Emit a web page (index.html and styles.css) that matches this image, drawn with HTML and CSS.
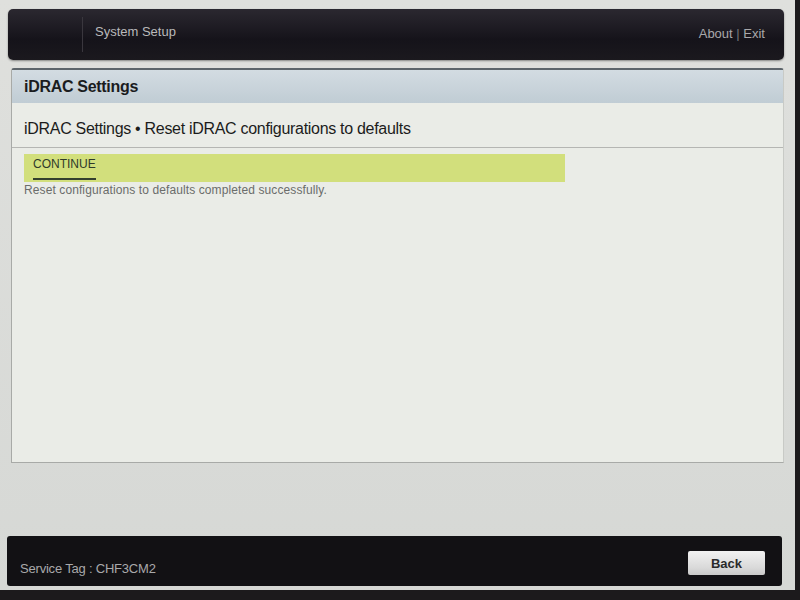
FILE: index.html
```html
<!DOCTYPE html>
<html lang="en">
<head>
  <meta charset="UTF-8">
  <title>System Setup</title>
  <link rel="stylesheet" href="styles.css">
</head>
<body>
  <div class="screen">
    <div class="topbar">
      <div class="logo-slot"></div>
      <div class="app-title">System Setup</div>
      <div class="links">About <span class="sep">|</span> Exit</div>
    </div>

    <div class="panel">
      <div class="panel-head">iDRAC Settings</div>
      <div class="panel-body">
        <div class="crumb">iDRAC Settings • Reset iDRAC configurations to defaults</div>
        <div class="action-row">
          <span class="action">CONTINUE</span>
        </div>
        <p class="message">Reset configurations to defaults completed successfully.</p>
      </div>
    </div>

    <div class="footer">
      <div class="tag">Service Tag : CHF3CM2</div>
      <button class="back">Back</button>
    </div>
  </div>
</body>
</html>
```

FILE: styles.css
```css
html, body {
  margin: 0;
  padding: 0;
}
body {
  width: 800px;
  height: 600px;
  background: #1c1a1c;
  font-family: "Liberation Sans", Arial, sans-serif;
  overflow: hidden;
}
.screen {
  width: 795px;
  height: 590px;
  background: linear-gradient(#dfe0dd, #d6d8d5);
  display: flex;
  flex-direction: column;
}

/* barra superiore */
.topbar {
  margin: 9px 11px 0 8px;
  height: 51px;
  border-radius: 5px;
  background: linear-gradient(#2b2830, #15131a 60%, #1b191e);
  box-shadow: 0 1px 2px rgba(0,0,0,0.4);
  display: flex;
  align-items: center;
  color: #b9b9bb;
  font-size: 13px;
}
.logo-slot {
  width: 74px;
  align-self: stretch;
  margin: 8px 0;
  border-right: 1px solid #3a373e;
}
.app-title {
  margin-left: 12px;
  margin-top: -6px;
  flex: 1;
}
.links {
  margin-right: 19px;
  margin-top: -2px;
  color: #a9a8ab;
}
.sep {
  color: #77757a;
}

/* pannello centrale */
.panel {
  margin: 8px 11px 0 11px;
  height: 392px;
  border: 1px solid #a8aaa7;
  border-right-color: #c8cac6;
  border-top: 2px solid #5d656b;
  border-radius: 3px 3px 0 0;
  background: #eaece7;
  display: flex;
  flex-direction: column;
}
.panel-head {
  height: 33px;
  padding-left: 12px;
  display: flex;
  align-items: center;
  font-size: 16px;
  font-weight: bold;
  letter-spacing: -0.3px;
  color: #1a1c1e;
  background: linear-gradient(#d3dce2, #c0ccd4);
}
.panel-body {
  flex: 1;
}
.crumb {
  padding: 17px 0 9px 12px;
  font-size: 16px;
  color: #1c1c1c;
  letter-spacing: -0.3px;
  border-bottom: 1px solid #b5b6b3;
}
.action-row {
  margin: 6px 0 0 12px;
  width: 541px;
  height: 28px;
  background: #d2df7c;
  display: flex;
  align-items: flex-end;
}
.action {
  margin: 0 0 2px 9px;
  font-size: 12px;
  color: #2f3a2a;
  padding-bottom: 7px;
  border-bottom: 2px solid #34402e;
  line-height: 14px;
}
.message {
  margin: 1px 0 0 12px;
  font-size: 12px;
  letter-spacing: 0.1px;
  color: #6b6d6b;
}

/* barra inferiore */
.footer {
  margin: auto 13px 4px 7px;
  height: 50px;
  border-radius: 3px;
  background: #121114;
  display: flex;
  align-items: center;
  justify-content: space-between;
  color: #a9a9ab;
  font-size: 13px;
}
.tag {
  margin-left: 13px;
  margin-top: 14px;
  letter-spacing: -0.2px;
}
.back {
  margin-right: 17px;
  width: 77px;
  height: 24px;
  border: none;
  border-radius: 2px;
  background: linear-gradient(#f2f2f2, #d9d9d9 70%, #c9c9c9);
  font-family: "Liberation Sans", Arial, sans-serif;
  font-size: 13px;
  font-weight: bold;
  color: #2a2a2a;
  padding: 0;
  margin-top: 4px;
}
```
